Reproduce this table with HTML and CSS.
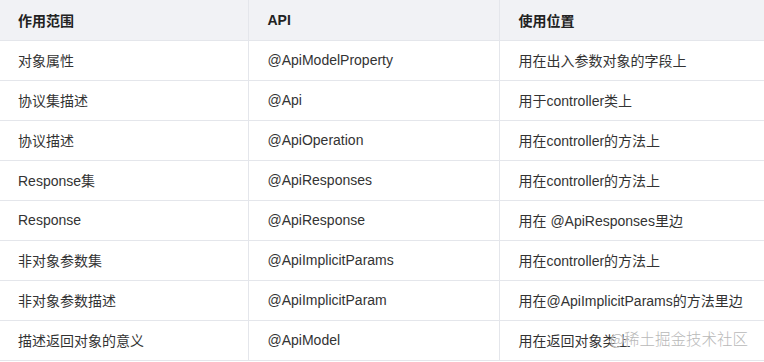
FILE: index.html
```html
<!DOCTYPE html>
<html lang="zh">
<head>
<meta charset="utf-8">
<link rel="stylesheet" href="styles.css">
</head>
<body>
<div class="wrap">
<table class="tbl">
  <colgroup><col class="c1"><col class="c2"><col class="c3"></colgroup>
  <thead>
    <tr><th>作用范围</th><th>API</th><th>使用位置</th></tr>
  </thead>
  <tbody>
    <tr><td>对象属性</td><td>@ApiModelProperty</td><td>用在出入参数对象的字段上</td></tr>
    <tr><td>协议集描述</td><td>@Api</td><td>用于controller类上</td></tr>
    <tr><td>协议描述</td><td>@ApiOperation</td><td>用在controller的方法上</td></tr>
    <tr><td>Response集</td><td>@ApiResponses</td><td>用在controller的方法上</td></tr>
    <tr><td>Response</td><td>@ApiResponse</td><td>用在 @ApiResponses里边</td></tr>
    <tr><td>非对象参数集</td><td>@ApiImplicitParams</td><td>用在controller的方法上</td></tr>
    <tr><td>非对象参数描述</td><td>@ApiImplicitParam</td><td>用在@ApiImplicitParams的方法里边</td></tr>
    <tr><td>描述返回对象的意义</td><td>@ApiModel</td><td>用在返回对象类上</td></tr>
  </tbody>
</table>
<div class="wm">@稀土掘金技术社区</div>
</div>
</body>
</html>
```
FILE: styles.css
```css
html, body { margin: 0; padding: 0; background: #fff; }
.wrap { position: relative; width: 764px; height: 362px; overflow: hidden; }
.tbl {
  border-collapse: collapse;
  width: 764px;
  table-layout: fixed;
  font-family: "Liberation Sans", Arial, "Noto Sans CJK SC", sans-serif;
  font-size: 14px;
  color: #333;
}
.c1 { width: 248px; }
.c2 { width: 251px; }
.c3 { width: 265px; }
.tbl th, .tbl td {
  border: 1px solid #e4e6eb;
  height: 40px;
  padding: 0 0 0 19px;
  text-align: left;
  vertical-align: middle;
  box-sizing: border-box;
}
.tbl th {
  background: #f1f2f5;
  font-weight: bold;
  color: #222;
}
.tbl tr > :first-child { border-left: none; padding-left: 18px; }
.tbl thead th { border-top: none; }
.wm {
  position: absolute;
  right: 16px;
  top: 328px;
  font-family: "Noto Sans CJK SC", sans-serif;
  font-size: 15.5px;
  line-height: 20px;
  font-weight: 300;
  color: #b9b9b9;
  text-shadow: 0 0 2px #fff, 0 0 2px #fff;
}
```
